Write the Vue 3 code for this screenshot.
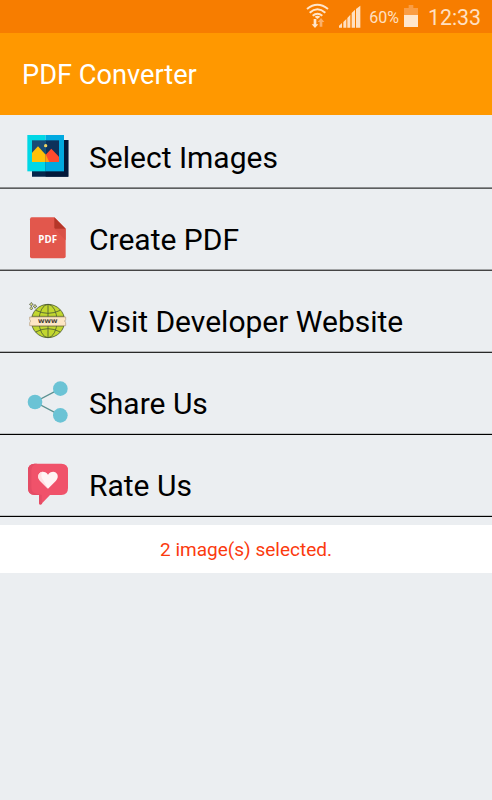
<template>
  <div class="app">
    <!-- status bar -->
    <div class="status-bar">
      <svg class="wifi" width="26" height="30" viewBox="0 0 78 90">
        <g fill="none" stroke="#ffe6cc" stroke-width="6">
          <path d="M6 27Q37 2 69 27" />
          <path d="M14 38Q37 18 61 38" />
          <path d="M23 47Q37 35 52 47" />
        </g>
        <path d="M29 50Q37 45 46 50L37 57Z" fill="#ffe6cc" />
        <path d="M26 57h8v16h6L30 84 20 73h6z" fill="#ffe6cc" />
        <path d="M48 54l10 12h-6v14h-8V66h-6z" fill="#fbb06a" />
      </svg>
      <svg class="signal" width="24" height="30" viewBox="0 0 72 90">
        <path
          fill="#ffe0c2"
          d="M3 83v-6l9-8v14zM16 83V66l9-9v26zM28 83V54l9-10v39zM41 83V39l10-10v54zM54 83V27l13-10v66z"
        />
      </svg>
      <span class="percent">60%</span>
      <svg class="battery" width="14" height="30" viewBox="0 0 42 90">
        <path d="M14 15h14v9h14v21H0V24h14z" fill="#fa9d44" />
        <path d="M0 45h42v36H0z" fill="#ffe6cc" />
      </svg>
      <span class="clock">12:33</span>
    </div>

    <header class="toolbar">
      <h1>{{ title }}</h1>
    </header>

    <!-- menu -->
    <ul class="menu">
      <li v-for="item in items" :key="item.icon" class="menu-item">
        <svg class="icon" width="60" height="56" viewBox="0 0 180 168">
          <g v-if="item.icon === 'images'">
            <path d="M36 36h109v110H36z" fill="#06254b" />
            <path d="M77 36h68v110H77z" fill="#03183a" />
            <path d="M22 21h55v109H22z" fill="#00d8e6" />
            <path d="M77 21h55v109H77z" fill="#00a9e0" />
            <path d="M36 37h41v65H36z" fill="#194b75" />
            <path d="M77 37h40v65H77z" fill="#0d325b" />
            <path d="M36 74l18-19 23 25v22H36z" fill="#ffc008" />
            <path d="M77 80l17-18 23 24v16H77z" fill="#ff4b2e" />
            <path d="M77 79l11 23H77z" fill="#ff9f10" />
            <circle cx="77" cy="53" r="5" fill="#efd565" />
          </g>

          <g v-else-if="item.icon === 'pdf'">
            <path d="M35 22h68l34 34v83q0 6-6 6H35q-5 0-5-6V28q0-6 5-6z" fill="#e2574c" />
            <path d="M103 56h34v35z" fill="#d95147" />
            <path d="M103 22l34 34h-31q-3 0-3-4z" fill="#b53629" />
            <text x="55" y="99" textLength="56" lengthAdjust="spacingAndGlyphs" class="pdf-text">PDF</text>
          </g>

          <g v-else-if="item.icon === 'web'">
            <circle cx="84" cy="87" r="50" fill="#c2d72f" />
            <g fill="none" stroke="#4d5b34" stroke-width="2.5">
              <circle cx="84" cy="87" r="50" />
              <ellipse cx="84" cy="87" rx="27" ry="50" />
              <path d="M84 37v100M47 55q37 18 74 0M47 120q37-20 74 0M36 73h96M36 102h96" />
            </g>
            <path d="M29 75h108v8l-3 4 3 5v9H29v-9l3-5-3-4z" fill="#fde6c5" stroke="#b59b7c" stroke-width="2" />
            <text x="54" y="93" textLength="58" lengthAdjust="spacingAndGlyphs" class="www-text">WWW</text>
            <g fill="#d8dc7c" stroke="#555b49" stroke-width="2">
              <path d="M34 31l2 4 4 2-4 2-2 4-2-4-4-2 4-2z" />
              <path d="M45 37l2 4 4 2-4 2-2 4-2-4-4-2 4-2z" />
              <path d="M34 43l2 4 3 2-3 2-2 3-2-3-3-2 3-2z" />
            </g>
          </g>

          <g v-else-if="item.icon === 'share'">
            <path d="M121 44L45 84l76 40" fill="none" stroke="#5c9191" stroke-width="4" />
            <g fill="#6bc3d5">
              <circle cx="121" cy="44" r="22" />
              <circle cx="45" cy="84" r="22" />
              <circle cx="121" cy="124" r="22" />
            </g>
          </g>

          <g v-else>
            <path
              d="M44 23h80q20 0 20 20v53q0 21-20 21H90l-26 27q-7 5-7-4v-23H44q-20 0-20-21V43q0-20 20-20z"
              fill="#f0526a"
            />
            <path
              d="M44 23h8q-18 2-18 22v48q0 19 18 21l13 3v22q0 3 2 4-10 7-10-4v-22H44q-20 0-20-21V43q0-20 20-20z"
              fill="#e44c65"
            />
            <path d="M84 98L60 74C46 58 62 41 76 49q5 3 8 7 3-4 8-7c14-8 30 9 16 25z" fill="#fff4f4" />
            <path d="M84 98L60 74C49 61 57 48 68 47q-9 11 1 24z" fill="#ffe0e2" />
          </g>
        </svg>
        <span class="label">{{ item.label }}</span>
      </li>
    </ul>

    <div class="message">{{ selectedCount }} image(s) selected.</div>
  </div>
</template>

<script setup>
import { ref } from 'vue'

const title = 'PDF Converter'
const selectedCount = ref(2)

const items = [
  { icon: 'images', label: 'Select Images' },
  { icon: 'pdf', label: 'Create PDF' },
  { icon: 'web', label: 'Visit Developer Website' },
  { icon: 'share', label: 'Share Us' },
  { icon: 'rate', label: 'Rate Us' }
]
</script>

<style>
body {
  background: #ebeef1;
}
</style>

<style scoped>
.app {
  min-height: 800px;
  background: #ebeef1;
  font-family: Roboto, sans-serif;
  overflow: hidden;
}

.status-bar {
  display: flex;
  height: 33px;
  padding-right: 11px;
  justify-content: flex-end;
  background: #f77d00;
  color: #ffe0c2;
}

.signal {
  margin-left: 7px;
}

.percent {
  margin-left: 7px;
  font-size: 16px;
  line-height: 35px;
}

.battery {
  margin-left: 5px;
}

.clock {
  margin-left: 10px;
  font-size: 21.3px;
  line-height: 35px;
}

.toolbar {
  display: flex;
  align-items: center;
  box-sizing: border-box;
  height: 82px;
  padding: 2px 0 0 22px;
  background: #ff9800;
}

.toolbar h1 {
  margin: 0;
  color: #fff;
  font-size: 27.2px;
  font-weight: 400;
  line-height: 32px;
}

.menu {
  margin: 0;
  padding: 0;
  list-style: none;
}

.menu-item {
  display: flex;
  box-sizing: border-box;
  height: 82px;
  padding: 21px 0 0 20px;
  border-bottom: 1px solid #000;
  box-shadow: inset 0 -1px #c0c3c5;
}

.menu-item:first-child {
  height: 74px;
  padding-top: 13px;
  border-color: #5c5e5f;
  box-shadow: inset 0 -1px #8d8f91;
}

.menu-item:nth-child(2) {
  border-color: #444;
  box-shadow: inset 0 -1px #a2a4a6;
}

.menu-item:nth-child(3) {
  border-color: #292929;
  box-shadow: inset 0 -1px #b2b4b6;
}

.label {
  margin-left: 9px;
  color: #000;
  font-size: 30px;
  line-height: 60px;
}

.pdf-text {
  fill: #fff;
  font: 700 31px "Open Sans", sans-serif;
}

.www-text {
  fill: #413a32;
  font: 700 15px "DejaVu Sans", sans-serif;
}

/* result strip under the menu */
.message {
  height: 48px;
  margin-top: 8px;
  background: #fff;
  color: #fb3a0e;
  font-size: 19px;
  line-height: 50px;
  text-align: center;
}
</style>
